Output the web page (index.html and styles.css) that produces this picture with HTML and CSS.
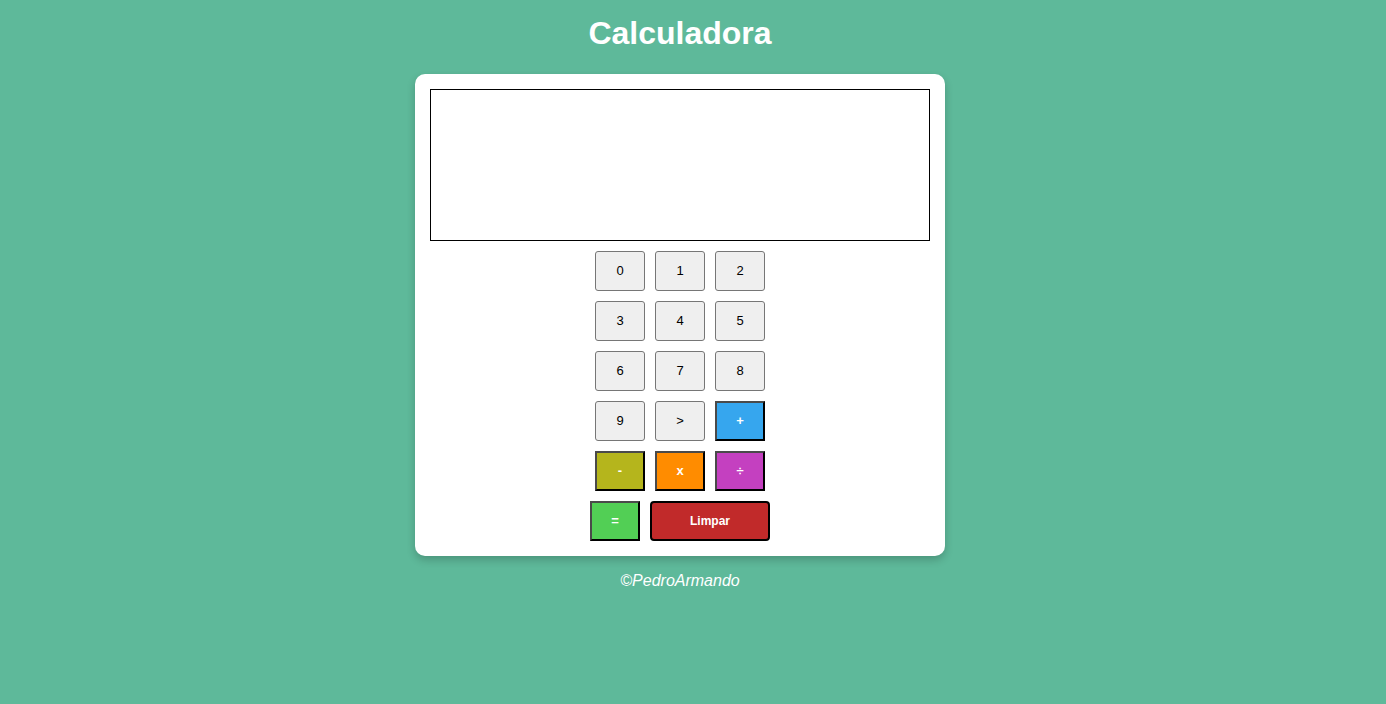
FILE: index.html
```html
<!DOCTYPE html>
<html lang="pt">
<head>
<meta charset="utf-8">
<title>Calculadora</title>
<link rel="stylesheet" href="styles.css">
</head>
<body>
<main class="page">
  <h1 class="title">Calculadora</h1>
  <section class="card">
    <div class="display"></div>
    <div class="keys">
      <div class="row">
        <button class="key">0</button><button class="key">1</button><button class="key">2</button>
      </div>
      <div class="row">
        <button class="key">3</button><button class="key">4</button><button class="key">5</button>
      </div>
      <div class="row">
        <button class="key">6</button><button class="key">7</button><button class="key">8</button>
      </div>
      <div class="row">
        <button class="key">9</button><button class="key">&gt;</button><button class="key op plus">+</button>
      </div>
      <div class="row">
        <button class="key op minus">-</button><button class="key op times">x</button><button class="key op divide">÷</button>
      </div>
      <div class="row">
        <button class="key op equals">=</button><button class="key clear">Limpar</button>
      </div>
    </div>
  </section>
  <p class="footer">©PedroArmando</p>
</main>
</body>
</html>
```

FILE: styles.css
```css
html, body {
  margin: 0;
  padding: 0;
}
body {
  background: #5eb99a;
  font-family: "Liberation Sans", Arial, sans-serif;
  height: 704px;
}
.page {
  display: flex;
  flex-direction: column;
  align-items: center;
  padding-right: 26px;
}
.title {
  margin: 15px 0 22px;
  font-size: 32px;
  line-height: 37px;
  font-weight: bold;
  color: #fff;
}
.card {
  width: 500px;
  padding: 15px;
  background: #fff;
  border-radius: 10px;
  box-shadow: 0 4px 8px rgba(0, 0, 0, 0.2);
  display: flex;
  flex-direction: column;
  align-items: center;
  gap: 10px;
}
.display {
  width: 498px;
  height: 150px;
  border: 1px solid #000;
}
.keys {
  display: flex;
  flex-direction: column;
  gap: 10px;
}
.row {
  display: flex;
  justify-content: center;
  gap: 10px;
}
.key {
  box-sizing: border-box;
  width: 50px;
  height: 40px;
  margin: 0;
  padding: 0 0 1px;
  font-family: "Liberation Sans", Arial, sans-serif;
  font-size: 13px;
  color: #000;
  background: #efefef;
  border: 1px solid #767676;
  border-radius: 3px;
}
.op {
  color: #fff;
  font-weight: bold;
  border-radius: 0;
  border-width: 2px;
  border-style: solid;
  border-color: #4a4a4a #000 #000 #4a4a4a;
}
.plus { background: #36a6ee; }
.minus { background: #b5b51c; }
.times { background: #ff8c00; }
.divide { background: #c440c0; }
.equals { background: #52cf55; }
.clear {
  width: 120px;
  color: #fff;
  font-weight: bold;
  font-size: 12px;
  background: #c12a2a;
  border: 2px solid #000;
  border-radius: 4px;
}
.footer {
  margin: 16px 0 0;
  font-size: 16px;
  line-height: 18px;
  font-style: italic;
  color: #fff;
}
```
